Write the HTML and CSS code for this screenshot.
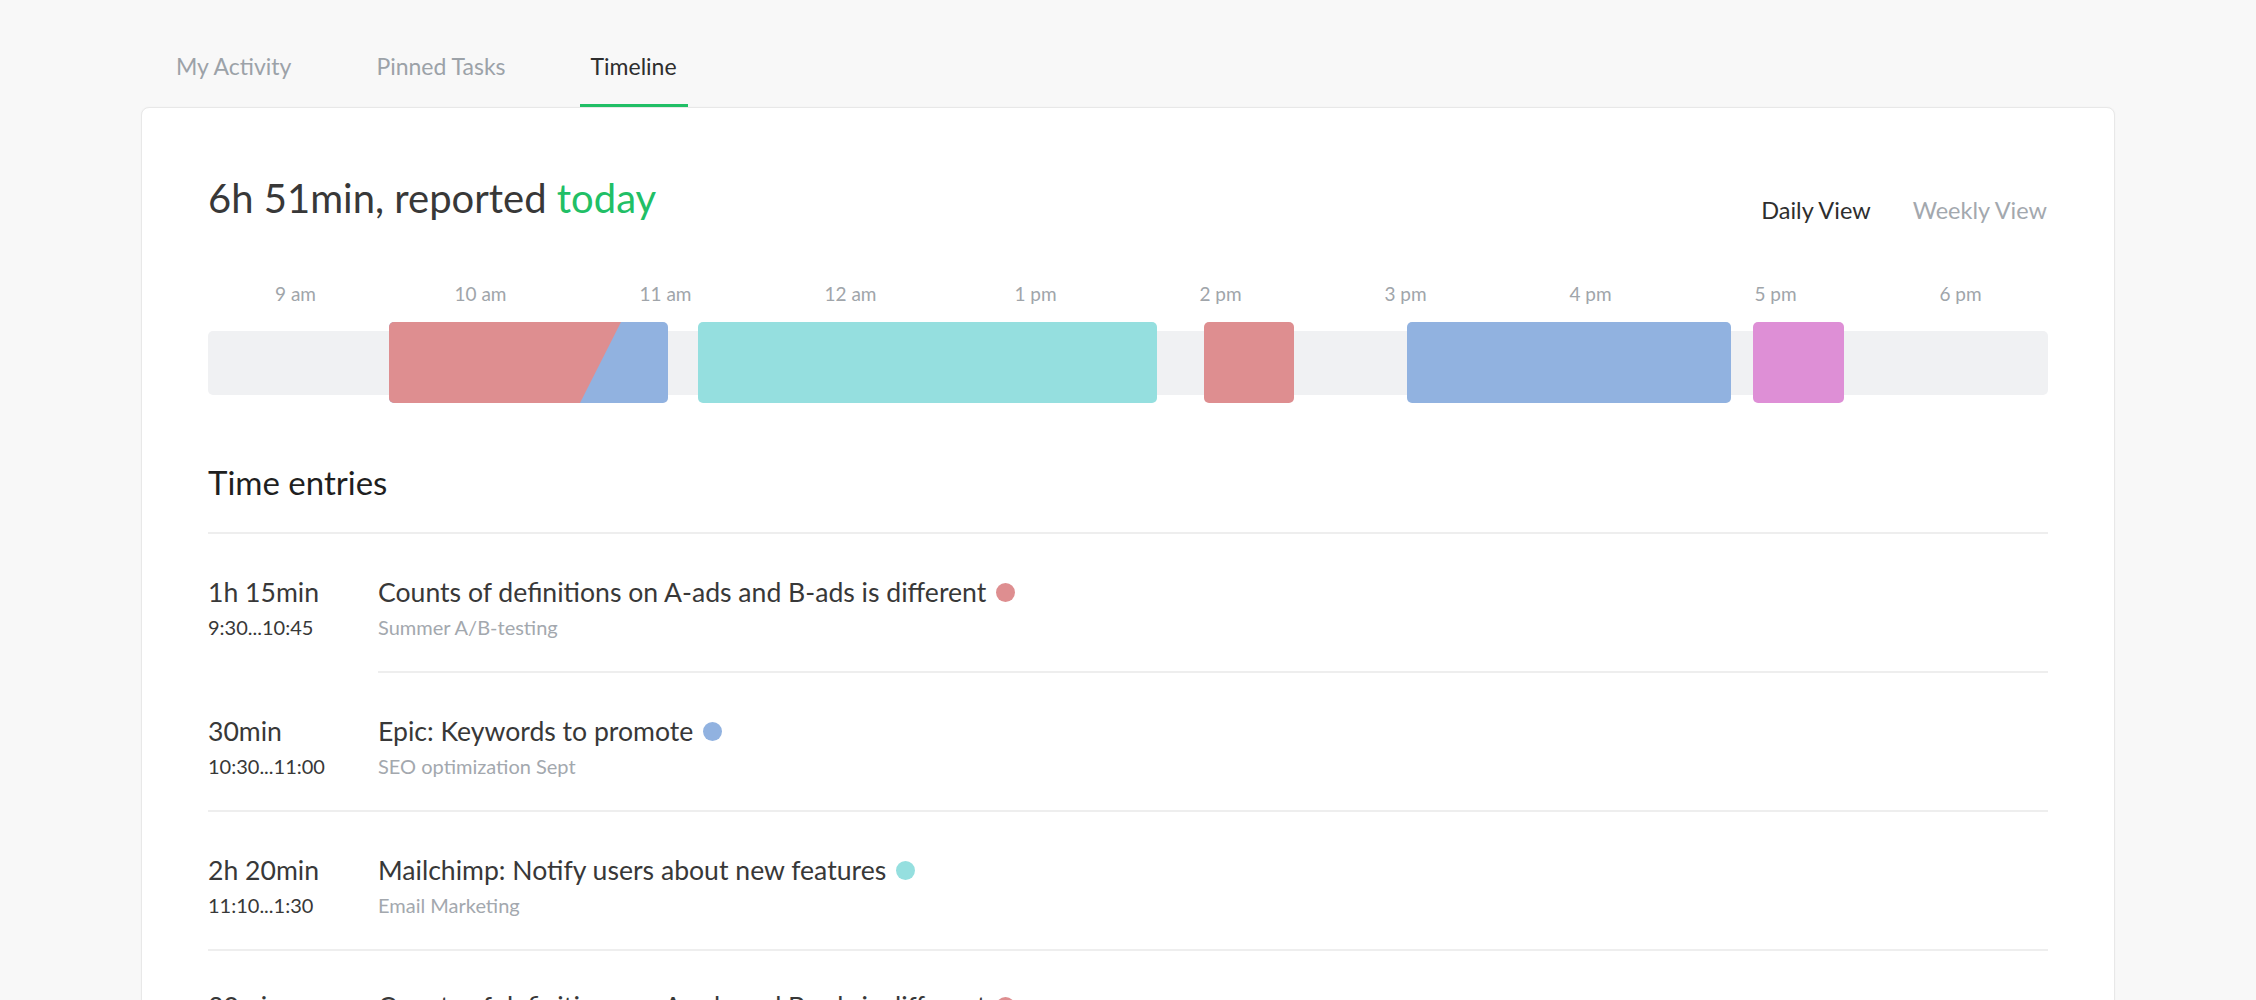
FILE: index.html
```html
<!DOCTYPE html>
<html lang="en">
<head>
<meta charset="utf-8">
<title>Timeline</title>
<link rel="stylesheet" href="styles.css">
</head>
<body>
<div class="page">
  <nav class="tabs">
    <a class="tab">My Activity</a>
    <a class="tab">Pinned Tasks</a>
    <a class="tab tab-active">Timeline</a>
  </nav>
  <section class="card">
    <header class="card-head">
      <h1 class="total">6h 51min, reported <span class="accent">today</span></h1>
      <div class="views">
        <span class="view view-active">Daily View</span>
        <span class="view">Weekly View</span>
      </div>
    </header>

    <div class="hours">
      <span>9 am</span><span>10 am</span><span>11 am</span><span>12 am</span><span>1 pm</span>
      <span>2 pm</span><span>3 pm</span><span>4 pm</span><span>5 pm</span><span>6 pm</span>
    </div>
    <div class="track">
      <div class="bar bar-split" style="left:181px;width:279px"><div class="split-red"></div></div>
      <div class="bar bar-teal" style="left:490px;width:459px"></div>
      <div class="bar bar-red" style="left:996px;width:90px"></div>
      <div class="bar bar-blue" style="left:1199px;width:324px"></div>
      <div class="bar bar-pink" style="left:1545px;width:91px"></div>
    </div>

    <h2 class="entries-title">Time entries</h2>
    <div class="entries">
      <div class="entry">
        <div class="entry-time">
          <div class="duration">1h 15min</div>
          <div class="range">9:30...10:45</div>
        </div>
        <div class="entry-main">
          <div class="entry-name">Counts of definitions on A-ads and B-ads is different <span class="dot dot-red"></span></div>
          <div class="project">Summer A/B-testing</div>
        </div>
      </div>
      <div class="entry entry-indent">
        <div class="entry-time">
          <div class="duration">30min</div>
          <div class="range">10:30...11:00</div>
        </div>
        <div class="entry-main">
          <div class="entry-name">Epic: Keywords to promote <span class="dot dot-blue"></span></div>
          <div class="project">SEO optimization Sept</div>
        </div>
      </div>
      <div class="entry">
        <div class="entry-time">
          <div class="duration">2h 20min</div>
          <div class="range">11:10...1:30</div>
        </div>
        <div class="entry-main">
          <div class="entry-name">Mailchimp: Notify users about new features <span class="dot dot-teal"></span></div>
          <div class="project">Email Marketing</div>
        </div>
      </div>
      <div class="entry">
        <div class="entry-time">
          <div class="duration">30min</div>
          <div class="range">1:40...2:10</div>
        </div>
        <div class="entry-main">
          <div class="entry-name">Counts of definitions on A-ads and B-ads is different <span class="dot dot-red"></span></div>
          <div class="project">Summer A/B-testing</div>
        </div>
      </div>
    </div>
  </section>
</div>
</body>
</html>
```

FILE: styles.css
```css
html, body {
  margin: 0;
  padding: 0;
  height: 100%;
  overflow: hidden;
}
body {
  background: #f8f8f8;
  font-family: Lato, "Open Sans", "Liberation Sans", sans-serif;
  color: #353535;
}
.page {
  width: 1974px;
  margin: 0 auto;
}
.tabs {
  display: flex;
  gap: 63px;
  padding: 52px 0 0 24px;
}
.tab {
  font-size: 23px;
  line-height: 28px;
  padding: 0 11px 24px;
  border-bottom: 3px solid transparent;
  color: #9ca2a8;
}
.tab-active {
  color: #2e2e2e;
  border-bottom-color: #21bf66;
}
.card {
  background: #fff;
  border: 1px solid #e8e8e8;
  border-radius: 8px;
  box-shadow: 0 0 2px rgba(0,0,0,0.04);
  padding: 66px 66px 40px;
  min-height: 1200px;
}
.card-head {
  display: flex;
  justify-content: space-between;
  align-items: flex-end;
}
.total {
  margin: 0;
  font-size: 40px;
  line-height: 48px;
  font-weight: 400;
  color: #383838;
}
.accent { color: #21bf66; }
.views {
  display: flex;
  gap: 42px;
  padding-right: 1px;
  margin-bottom: -2px;
}
.view {
  font-size: 23.5px;
  line-height: 28px;
  color: #a3a8ae;
}
.view-active { color: #2e2e2e; }
.hours {
  display: grid;
  grid-template-columns: repeat(10, 185px);
  justify-content: center;
  margin-top: 60px;
  font-size: 19px;
  line-height: 24px;
  color: #a0a5aa;
  text-align: center;
}
.track {
  position: relative;
  height: 64px;
  margin-top: 25px;
  background: #f0f1f3;
  border-radius: 5px;
}
.bar {
  position: absolute;
  top: -9px;
  bottom: -8px;
  border-radius: 5px;
}
.bar-split {
  background: #91b2e0;
  overflow: hidden;
}
.split-red {
  position: absolute;
  inset: 0;
  background: #de8e90;
  clip-path: polygon(0 0, 232px 0, 191px 100%, 0 100%);
}
.bar-teal { background: #95dfdf; }
.bar-red { background: #de8e90; }
.bar-blue { background: #91b2e0; }
.bar-pink { background: #de8fd6; }
.entries-title {
  margin: 67px 0 0;
  font-size: 33px;
  line-height: 40px;
  font-weight: 400;
  color: #1f1f1f;
}
.entries {
  margin-top: 30px;
}
.entry {
  display: flex;
  border-top: 2px solid #eeeeee;
  padding: 42px 0 32px;
}
.entry:last-child {
  padding-top: 39px;
}
.entry-indent {
  border-top: none;
  padding-top: 44px;
  background: linear-gradient(#eeeeee, #eeeeee) 170px 0 / calc(100% - 170px) 2px no-repeat;
}
.entry-time {
  width: 170px;
  flex: none;
}
.duration, .entry-name {
  font-size: 26.6px;
  line-height: 32px;
  color: #383838;
}
.range {
  font-size: 20px;
  line-height: 24px;
  margin-top: 7px;
  color: #383838;
}
.project {
  font-size: 20px;
  line-height: 24px;
  margin-top: 7px;
  color: #a3a8ae;
}
.entry-name {
  display: flex;
  align-items: center;
  gap: 10px;
}
.dot {
  width: 19px;
  height: 19px;
  border-radius: 50%;
  display: inline-block;
}
.dot-red { background: #de8e90; }
.dot-blue { background: #91b2e0; }
.dot-teal { background: #95dfdf; }
```
